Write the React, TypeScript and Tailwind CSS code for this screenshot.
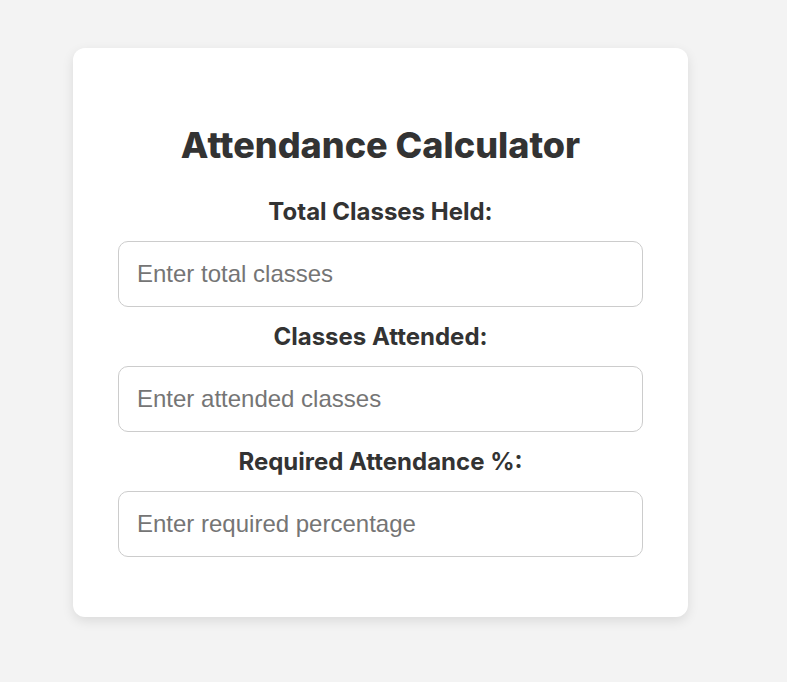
import React from "react";

const fields = [
  { label: "Total Classes Held:", placeholder: "Enter total classes" },
  { label: "Classes Attended:", placeholder: "Enter attended classes" },
  { label: "Required Attendance %:", placeholder: "Enter required percentage" },
];

export default function App() {
  return (
    <div className="min-h-[682px] w-full bg-[#f3f3f3] pt-[48px] pl-[73px]" style={{ fontFamily: "Inter, 'Noto Sans', sans-serif" }}>
      <div className="w-[615px] rounded-[12px] bg-white px-[45px] pt-[78px] pb-[60px] shadow-[0_4px_12px_rgba(0,0,0,0.1)] text-[#333333]">
        <h1 className="text-center text-[36px] leading-[38px] font-extrabold">Attendance Calculator</h1>
        <div className="mt-[36px] flex flex-col gap-[18px]">
          {fields.map((f) => (
            <div key={f.label} className="flex flex-col">
              <label className="text-center text-[24px] leading-[24px] font-bold">{f.label}</label>
              <input
                className="mt-[17px] h-[66px] w-full rounded-[10px] border border-[#cccccc] px-[18px] text-[24px] text-[#333] placeholder:text-[#757575] outline-none"
                style={{ fontFamily: "'Liberation Sans', Arial, sans-serif" }}
                placeholder={f.placeholder}
              />
            </div>
          ))}
        </div>
      </div>
    </div>
  );
}
